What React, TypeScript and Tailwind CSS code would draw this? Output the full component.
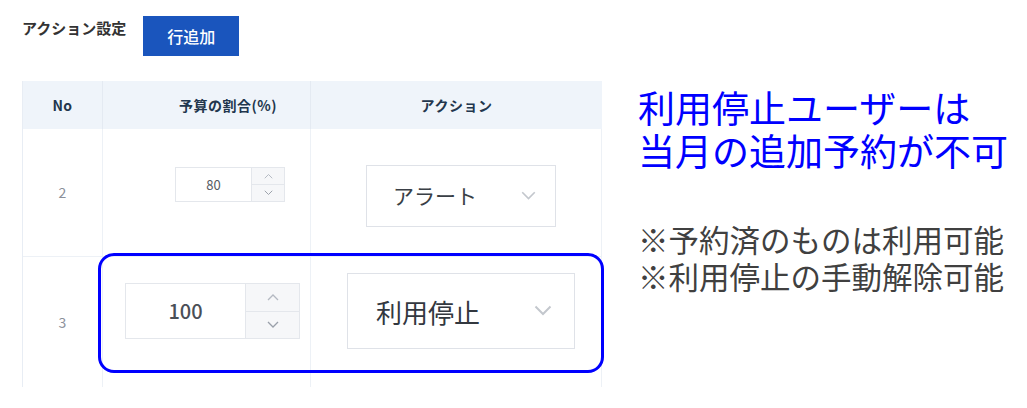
import React from "react";

const Chevron = ({ dir, className }: { dir: "up" | "down"; className?: string }) => (
  <svg viewBox="0 0 12 8" className={className} fill="none" stroke="currentColor" strokeWidth="1.3">
    {dir === "up" ? <path d="M1 7 L6 2 L11 7" /> : <path d="M1 1 L6 6 L11 1" />}
  </svg>
);

function NumInput({
  value,
  w,
  h,
  textW,
  textClass,
  chevClass,
}: {
  value: string;
  w: string;
  h: string;
  textW: string;
  textClass: string;
  chevClass: string;
}) {
  return (
    <div className={`flex border border-[#e4e7ec] bg-white ${w} ${h}`}>
      <div className={`flex items-center justify-center ${textW} ${textClass}`}>{value}</div>
      <div className="flex-1 flex flex-col border-l border-[#e4e7ec] bg-[#f6f7f9]">
        <div className="flex-1 flex items-center justify-center border-b border-[#e4e7ec] text-[#b4b9c2]">
          <Chevron dir="up" className={chevClass} />
        </div>
        <div className="flex-1 flex items-center justify-center text-[#9aa0aa]">
          <Chevron dir="down" className={chevClass} />
        </div>
      </div>
    </div>
  );
}

export default function App() {
  const jp = { fontFamily: '"Noto Sans CJK JP", "Noto Sans", sans-serif' };
  return (
    <div className="relative w-[1027px] h-[408px] bg-white overflow-hidden" style={jp}>
      {/* top bar */}
      <div className="flex items-start pl-[22px] pt-[16px] h-[81px]">
        <div className="mt-[2px] text-[15px] leading-[20px] font-bold text-[#333]">
          アクション設定
        </div>
        <button className="ml-[17px] w-[96px] h-[40px] bg-[#1a55bd] text-white text-[16px] font-medium flex items-center justify-center">
          行追加
        </button>
      </div>

      <div className="flex items-start">
        {/* table */}
        <div className="ml-[22px] w-[580px] border-l border-[#e8edf4]">
          {/* header */}
          <div className="flex h-[48px] bg-[#eff4fa] text-[#22364d] text-[14px] font-bold tracking-[0.5px]">
            <div className="w-[80px] flex items-center justify-center border-r border-[#e4eaf2]">No</div>
            <div className="w-[208px] flex items-center pl-[76px] border-r border-[#e4eaf2]">予算の割合(%)</div>
            <div className="flex-1 flex items-center justify-center">アクション</div>
          </div>
          {/* row 2 */}
          <div className="flex h-[128px] border-b border-[#edf1f6]">
            <div className="w-[80px] flex items-center justify-center border-r border-[#edf1f6] text-[#8b9099] text-[14px]">
              2
            </div>
            <div className="w-[208px] pl-[72px] pt-[38px] border-r border-[#edf1f6]">
              <NumInput
                value="80"
                w="w-[110px]"
                h="h-[35px]"
                textW="w-[75px]"
                textClass="text-[13px] text-[#555b63]"
                chevClass="w-[9px] h-[6px]"
              />
            </div>
            <div className="flex-1 pl-[55px] pt-[36px] border-r border-[#edf1f6]">
              <div className="w-[190px] h-[62px] border border-[#dfe2e8] bg-white flex items-center pl-[26px] pr-[18px]">
                <span className="flex-1 text-[21px] text-[#3a3f46]">アラート</span>
                <Chevron dir="down" className="w-[17px] h-[10px] text-[#c3c7cd]" />
              </div>
            </div>
          </div>
          {/* row 3 */}
          <div className="flex h-[130px]">
            <div className="w-[80px] flex items-center justify-center border-r border-[#edf1f6] text-[#8b9099] text-[14px]">
              3
            </div>
            <div className="w-[208px] pl-[22px] pt-[26px] border-r border-[#edf1f6]">
              <NumInput
                value="100"
                w="w-[175px]"
                h="h-[56px]"
                textW="w-[119px]"
                textClass="text-[20px] font-medium text-[#4a4f57]"
                chevClass="w-[14px] h-[8px]"
              />
            </div>
            <div className="flex-1 pl-[36px] pt-[16px] border-r border-[#edf1f6]">
              <div className="w-[228px] h-[76px] border border-[#dfe2e8] bg-white flex items-center pl-[28px] pr-[21px]">
                <span className="flex-1 text-[26px] text-[#33383f]">利用停止</span>
                <Chevron dir="down" className="w-[20px] h-[12px] text-[#c3c7cd]" />
              </div>
            </div>
          </div>
        </div>

        {/* right notes */}
        <div className="ml-[36px] mt-[5px]">
          <div className="text-[37px] leading-[43px] text-[#0000ff]">
            <div>利用停止ユーザーは</div>
            <div>当月の追加予約が不可</div>
          </div>
          <div className="mt-[49px] text-[30.5px] leading-[37px] text-[#404040]">
            <div>※予約済のものは利用可能</div>
            <div>※利用停止の手動解除可能</div>
          </div>
        </div>
      </div>

      {/* highlight annotation */}
      <div className="absolute left-[98px] top-[253px] w-[506px] h-[120px] border-[3px] border-[#0000ff] rounded-[16px]" />
    </div>
  );
}
